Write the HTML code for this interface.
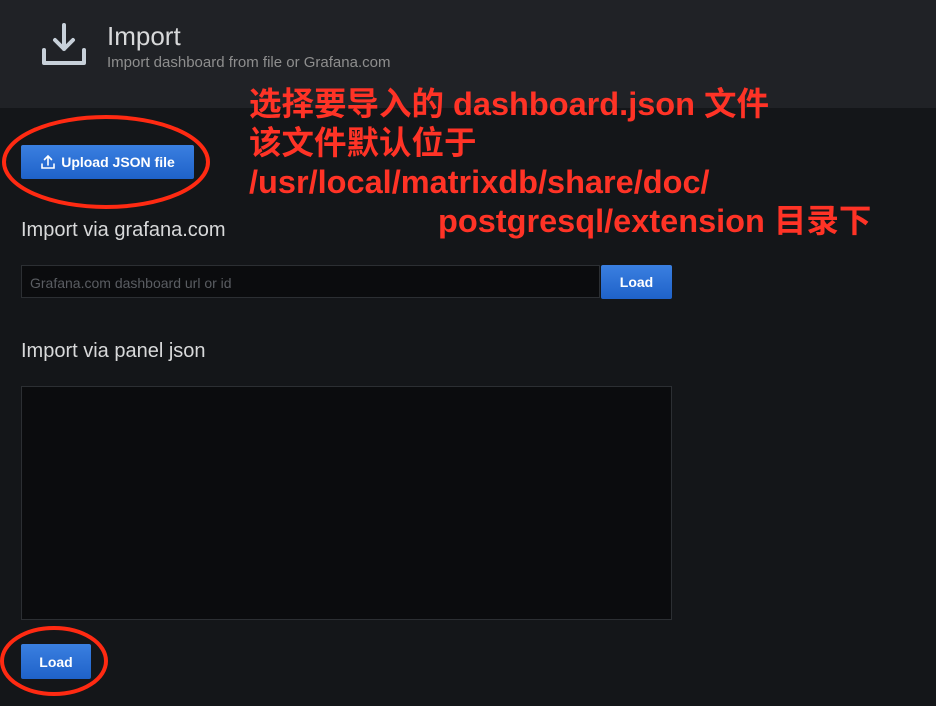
<!DOCTYPE html>
<html><head><meta charset="utf-8"><style>
body{margin:0;width:936px;height:706px;background:#141619;font-family:"Liberation Sans","Noto Sans CJK SC",sans-serif;position:relative;overflow:hidden}
.hdr{position:absolute;left:0;top:0;width:936px;height:108px;background:#202226}
.abs{position:absolute}
.btn{position:absolute;background:linear-gradient(#3a7fe0,#1f62c9);color:#fff;font-weight:bold;font-size:14px;border-radius:2px;display:flex;align-items:center;justify-content:center}
.red{position:absolute;color:#ff3326;font-weight:bold;font-size:32.5px;line-height:1;white-space:nowrap}
h3{position:absolute;margin:0;font-weight:normal;color:#d8d9da;font-size:20px}
</style></head><body>
<div class="hdr"></div>
<svg class="abs" style="left:40px;top:22px" width="48" height="46" viewBox="0 0 48 46"><g fill="none" stroke="#c7d0d9" stroke-width="4" stroke-linecap="round" stroke-linejoin="round"><path d="M24 3v24M15 18l9 9 9-9"/><path d="M4 28v13h40V28"/></g></svg>
<div class="abs" style="left:107px;top:21px;font-size:26px;color:#d8d9da">Import</div>
<div class="abs" style="left:107px;top:54px;font-size:15px;color:#8e8e8e">Import dashboard from file or Grafana.com</div>

<div class="btn" style="left:21px;top:145px;width:173px;height:34px"><svg width="16" height="16" viewBox="0 0 16 16" style="margin-right:5px"><g fill="none" stroke="#fff" stroke-width="1.6" stroke-linecap="round"><path d="M8 11V2M4.5 5.5L8 2l3.5 3.5M2 10v4h12v-4"/></g></svg>Upload JSON file</div>

<h3 style="left:21px;top:219px">Import via grafana.com</h3>
<div class="abs" style="left:21px;top:265px;width:579px;height:33px;background:#0b0c0e;border:1px solid #2c2f33;box-sizing:border-box"></div>
<div class="abs" style="left:30px;top:275px;font-size:14px;color:#5a5d62">Grafana.com dashboard url or id</div>
<div class="btn" style="left:601px;top:265px;width:71px;height:34px">Load</div>

<h3 style="left:21px;top:340px">Import via panel json</h3>
<div class="abs" style="left:21px;top:386px;width:651px;height:234px;background:#0b0c0e;border:1px solid #2c2f33;box-sizing:border-box"></div>
<div class="btn" style="left:21px;top:644px;width:70px;height:35px">Load</div>

<div class="red" style="left:249px;top:88px">选择要导入的 dashboard.json 文件</div>
<div class="red" style="left:249px;top:127px">该文件默认位于</div>
<div class="red" style="left:249px;top:166px">/usr/local/matrixdb/share/doc/</div>
<div class="red" style="left:438px;top:205px">postgresql/extension 目录下</div>

<svg class="abs" style="left:0;top:0" width="936" height="706"><g fill="none" stroke="#ff2a12" stroke-width="4"><ellipse cx="106" cy="162" rx="102" ry="45"/><ellipse cx="54" cy="661" rx="52" ry="33"/></g></svg>
</body></html>
